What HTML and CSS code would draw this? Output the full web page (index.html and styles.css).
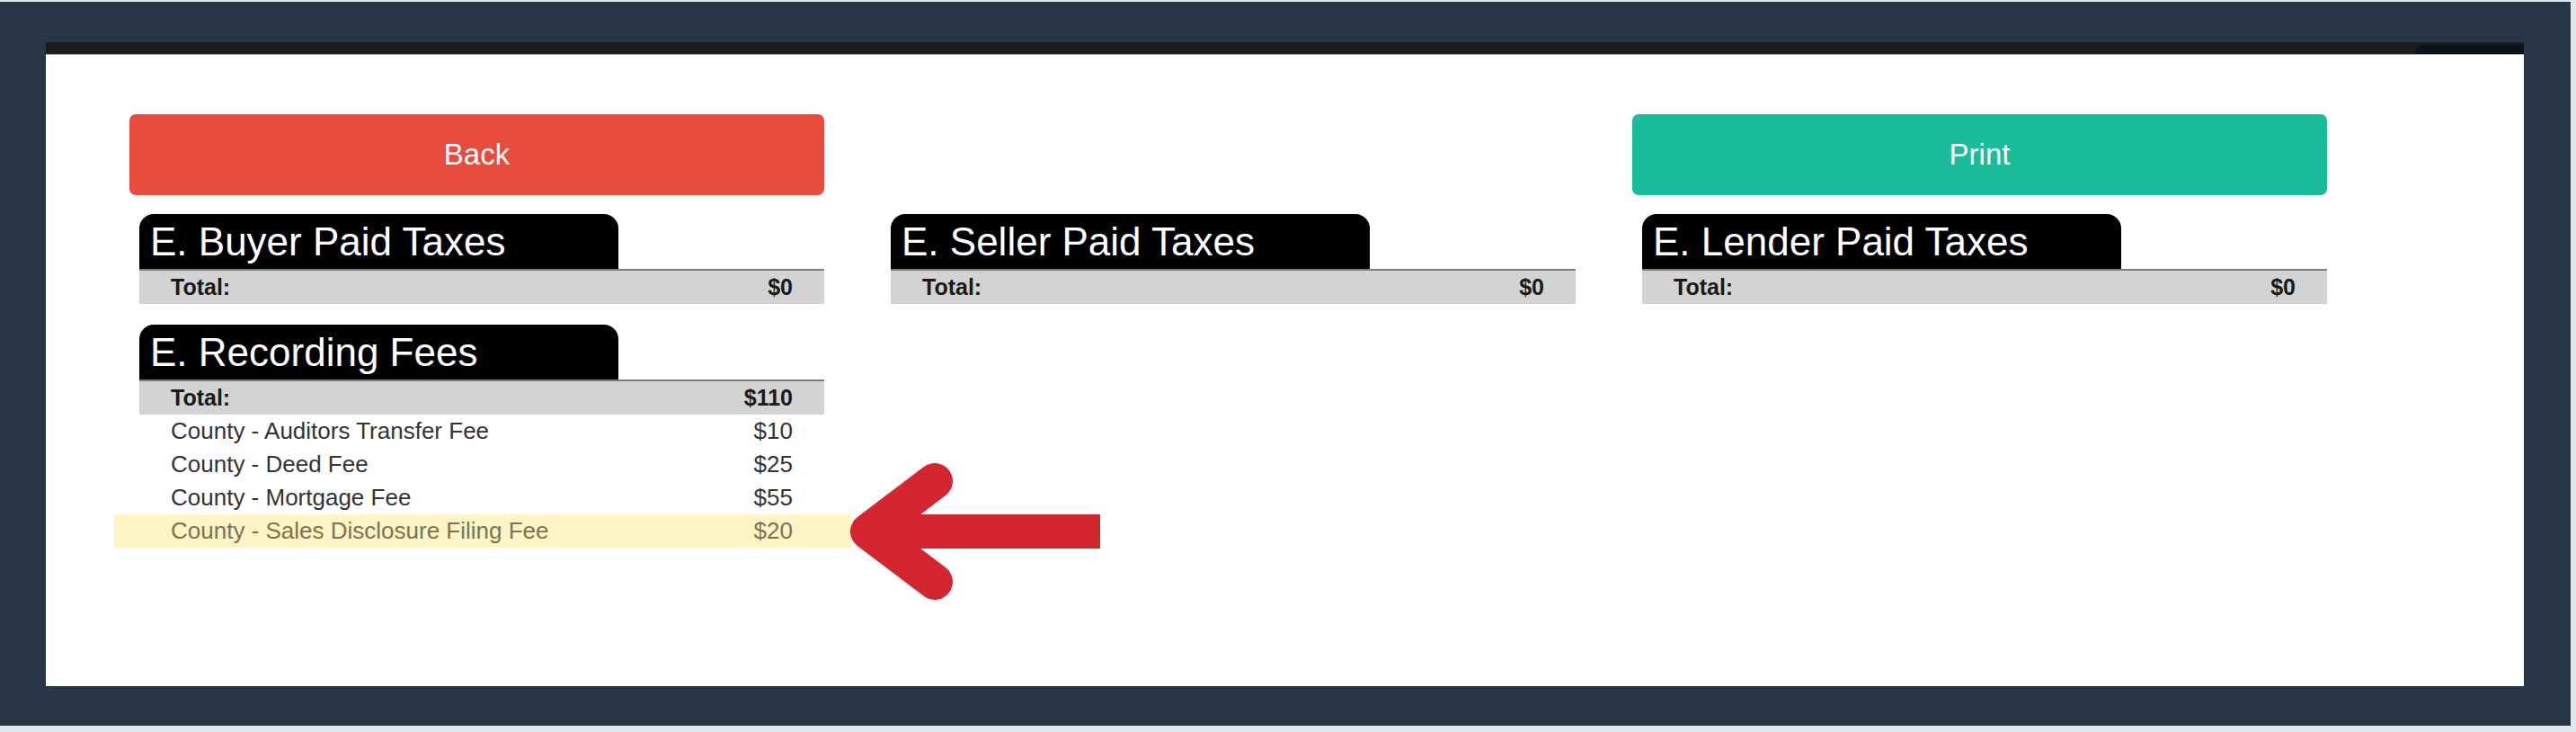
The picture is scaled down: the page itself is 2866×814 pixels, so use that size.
FILE: index.html
```html
<!DOCTYPE html>
<html lang="en">
<head>
<meta charset="utf-8">
<title>Fees</title>
<link rel="stylesheet" href="styles.css">
</head>
<body>
<div class="frame">
  <div class="panel">
    <div class="topbar"><div class="topbar-tab"></div></div>
    <div class="content">
      <div class="col">
        <button class="btn btn-back">Back</button>
        <section class="block">
          <div class="tab">E. Buyer Paid Taxes</div>
          <div class="row total"><span>Total:</span><span>$0</span></div>
        </section>
        <section class="block">
          <div class="tab">E. Recording Fees</div>
          <div class="row total"><span>Total:</span><span>$110</span></div>
          <div class="row item"><span>County - Auditors Transfer Fee</span><span>$10</span></div>
          <div class="row item"><span>County - Deed Fee</span><span>$25</span></div>
          <div class="row item"><span>County - Mortgage Fee</span><span>$55</span></div>
          <div class="row item highlight"><span>County - Sales Disclosure Filing Fee</span><span>$20</span></div>
        </section>
      </div>
      <div class="col">
        <div class="btn-spacer"></div>
        <section class="block">
          <div class="tab">E. Seller Paid Taxes</div>
          <div class="row total"><span>Total:</span><span>$0</span></div>
        </section>
      </div>
      <div class="col">
        <button class="btn btn-print">Print</button>
        <section class="block">
          <div class="tab">E. Lender Paid Taxes</div>
          <div class="row total"><span>Total:</span><span>$0</span></div>
        </section>
      </div>
    </div>
    <svg class="arrow" width="290" height="175" viewBox="0 0 290 175" aria-hidden="true">
      <rect x="26" y="67" width="258" height="38" fill="#d42631"/>
      <polyline points="100,30 26,86 100,142" fill="none" stroke="#d42631" stroke-width="40" stroke-linecap="round" stroke-linejoin="round"/>
    </svg>
  </div>
</div>
</body>
</html>
```

FILE: styles.css
```css
html, body {
  margin: 0;
  padding: 0;
}
body {
  background: #e4e7ea;
  width: 2866px;
  height: 814px;
  overflow: hidden;
  font-family: "Liberation Sans", Arial, sans-serif;
}
.frame {
  margin-top: 2px;
  width: 2860px;
  height: 805px;
  background: #263646;
  padding: 45px 52px 0 51px;
  box-sizing: border-box;
}
.panel {
  position: relative;
  height: 716px;
  background: #ffffff;
}
.topbar {
  height: 13px;
  background: #1c1c1c;
  border-bottom: 1px solid #a3a7ab;
  display: flex;
  justify-content: flex-end;
  align-items: flex-end;
}
.topbar-tab {
  width: 121px;
  height: 10px;
  background: #0b131a;
  border-top-left-radius: 7px;
}
.content {
  display: grid;
  grid-template-columns: 773px 773px 773px;
  column-gap: 63px;
  padding: 66px 0 0 93px;
}
.col {
  display: flex;
  flex-direction: column;
}
.btn {
  height: 90px;
  border: none;
  border-radius: 7px;
  color: #ffffff;
  font-family: "Liberation Sans", Arial, sans-serif;
  font-size: 33px;
  margin: 0 0 21px 0;
  padding: 0;
}
.btn-back {
  background: #e74c3c;
}
.btn-print {
  background: #1abc9c;
}
.btn-spacer {
  height: 90px;
  margin-bottom: 21px;
}
.block {
  margin: 0 0 23px 11px;
}
.tab {
  width: 533px;
  height: 61px;
  line-height: 61px;
  background: #000000;
  color: #ffffff;
  font-size: 44px;
  padding-left: 12px;
  box-sizing: border-box;
  border-radius: 16px 16px 0 0;
  white-space: nowrap;
}
.row {
  display: flex;
  justify-content: space-between;
  height: 37px;
  line-height: 37px;
  padding: 0 35px 0 35px;
  font-size: 26px;
}
.total {
  background: #d3d3d3;
  border-top: 2px solid #7c7c7c;
  font-weight: bold;
  font-size: 25px;
  color: #1a1a1a;
}
.item {
  color: #333333;
}
.highlight {
  background: #fcf4c5;
  color: #7a7452;
  margin: 0 -30px 0 -28px;
  padding: 0 65px 0 63px;
}
.arrow {
  position: absolute;
  left: 889px;
  top: 458px;
}
```
